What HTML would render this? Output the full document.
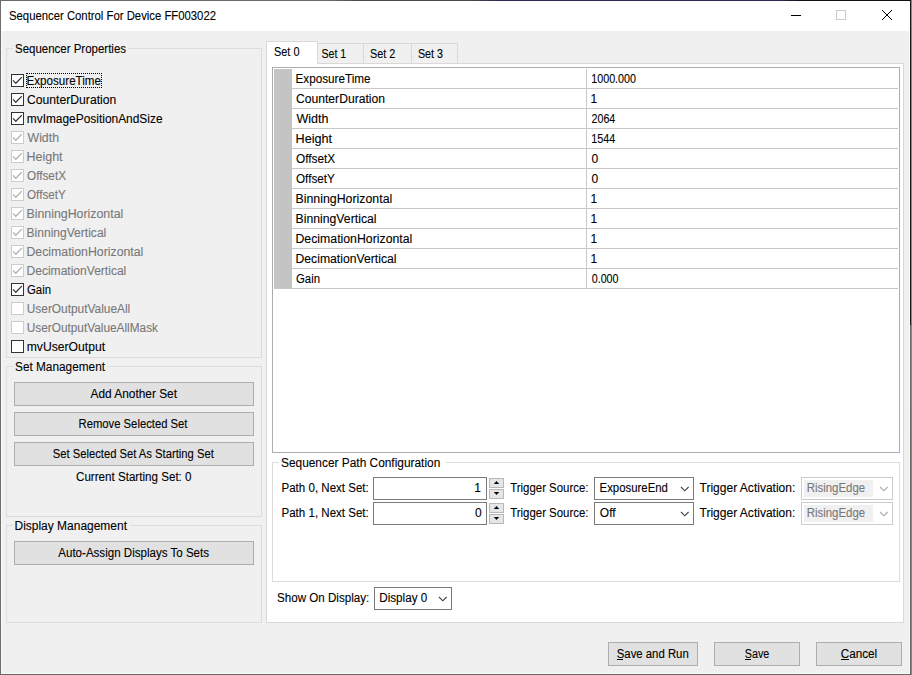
<!DOCTYPE html>
<html><head><meta charset="utf-8"><title>Sequencer Control For Device FF003022</title>
<style>
html,body{margin:0;padding:0}
body{width:912px;height:675px;overflow:hidden;background:#f0f0f0;position:relative;font-family:"Liberation Sans", sans-serif;font-size:12px;color:#000}
div,span,i,b,u{position:absolute;box-sizing:border-box}
.t{white-space:pre;line-height:16px;height:16px;transform-origin:0 0;-webkit-text-stroke:0.1px currentColor}
.ak{height:1px;background:#000}
.grp{left:0;top:0;width:0;height:0}
.gb{border:1px solid #dcdcdc}
.btn{background:#e1e1e1;border:1px solid #adadad}
.cb{width:13px;height:13px;background:#fff;border:1px solid #333}
.cb.d{border-color:#ccc;background:#fff}
.cb svg{position:absolute;left:-1px;top:-1px}
.hl{height:1px;background:#c8c8c8}
.combo{background:#fff;border:1px solid #7a7a7a}
.combo.d{border-color:#ccc}
svg{position:absolute;overflow:visible}
</style></head><body>

<div class="grp" id="window-frame">
<div style="left:0;top:0;width:912px;height:675px;background:#f0f0f0"></div>
<div style="left:1px;top:1px;width:909px;height:30px;background:#fff"></div>
<div style="left:0;top:0;width:912px;height:1px;background:linear-gradient(90deg,#6a6a6a 0,#6a6a6a 330px,#4a4a4a 360px,#4a4a4e 470px,#2a2a55 500px,#2a2a55 780px,#111 800px,#111 912px)"></div>
<div style="left:0;top:0;width:1px;height:675px;background:#6e6e6e"></div>
<div style="left:1px;top:31px;width:1px;height:643px;background:#fafafa"></div>
<div style="left:909px;top:31px;width:1px;height:643px;background:#fafafa"></div>
<div style="left:1px;top:673px;width:909px;height:1px;background:#fafafa"></div>
<div style="left:0;top:674px;width:912px;height:1px;background:#666"></div>
<div style="left:910px;top:0;width:1px;height:675px;background:linear-gradient(180deg,#1c1c1c 0,#1c1c1c 325px,#726c67 325px,#6b6560 675px)"></div>
<div style="left:911px;top:0;width:1px;height:675px;background:#3a96f0"></div>
</div>
<div class="grp" id="title-bar">
<svg style="left:0;top:0" width="912" height="31"><path d="M791 15.5H801" stroke="#000" stroke-width="1"/><rect x="836.5" y="10.5" width="9" height="9" fill="none" stroke="#ccc" stroke-width="1"/><path d="M882 10L892 20M892 10L882 20" stroke="#000" stroke-width="1"/></svg>
<span class="t" style="left:9px;top:8px;transform:translate(0.00px,0.00px) scaleX(0.9433);color:#000">Sequencer Control For Device FF003022</span>
</div>
<div class="grp" id="left-panel">
<div class="gb" style="left:6px;top:48px;width:256px;height:310px"></div>
<div class="gb" style="left:6px;top:366px;width:256px;height:151px"></div>
<div class="gb" style="left:6px;top:525px;width:256px;height:98px"></div>
<div style="left:13px;top:47px;width:115px;height:3px;background:#f0f0f0"></div>
<div style="left:13px;top:365px;width:95px;height:3px;background:#f0f0f0"></div>
<div style="left:13px;top:524px;width:117px;height:3px;background:#f0f0f0"></div>
<div class="cb" style="left:11px;top:74px"><svg width="13" height="13"><path d="M2.1 6.3L4.8 9.3L10.8 3.1" fill="none" stroke="#333" stroke-width="1.25"/></svg></div>
<div class="cb" style="left:11px;top:93px"><svg width="13" height="13"><path d="M2.1 6.3L4.8 9.3L10.8 3.1" fill="none" stroke="#333" stroke-width="1.25"/></svg></div>
<div class="cb" style="left:11px;top:112px"><svg width="13" height="13"><path d="M2.1 6.3L4.8 9.3L10.8 3.1" fill="none" stroke="#333" stroke-width="1.25"/></svg></div>
<div class="cb d" style="left:11px;top:131px"><svg width="13" height="13"><path d="M2.1 6.3L4.8 9.3L10.8 3.1" fill="none" stroke="#adadad" stroke-width="1.25"/></svg></div>
<div class="cb d" style="left:11px;top:150px"><svg width="13" height="13"><path d="M2.1 6.3L4.8 9.3L10.8 3.1" fill="none" stroke="#adadad" stroke-width="1.25"/></svg></div>
<div class="cb d" style="left:11px;top:169px"><svg width="13" height="13"><path d="M2.1 6.3L4.8 9.3L10.8 3.1" fill="none" stroke="#adadad" stroke-width="1.25"/></svg></div>
<div class="cb d" style="left:11px;top:188px"><svg width="13" height="13"><path d="M2.1 6.3L4.8 9.3L10.8 3.1" fill="none" stroke="#adadad" stroke-width="1.25"/></svg></div>
<div class="cb d" style="left:11px;top:207px"><svg width="13" height="13"><path d="M2.1 6.3L4.8 9.3L10.8 3.1" fill="none" stroke="#adadad" stroke-width="1.25"/></svg></div>
<div class="cb d" style="left:11px;top:226px"><svg width="13" height="13"><path d="M2.1 6.3L4.8 9.3L10.8 3.1" fill="none" stroke="#adadad" stroke-width="1.25"/></svg></div>
<div class="cb d" style="left:11px;top:245px"><svg width="13" height="13"><path d="M2.1 6.3L4.8 9.3L10.8 3.1" fill="none" stroke="#adadad" stroke-width="1.25"/></svg></div>
<div class="cb d" style="left:11px;top:264px"><svg width="13" height="13"><path d="M2.1 6.3L4.8 9.3L10.8 3.1" fill="none" stroke="#adadad" stroke-width="1.25"/></svg></div>
<div class="cb" style="left:11px;top:283px"><svg width="13" height="13"><path d="M2.1 6.3L4.8 9.3L10.8 3.1" fill="none" stroke="#333" stroke-width="1.25"/></svg></div>
<div class="cb d" style="left:11px;top:302px"></div>
<div class="cb d" style="left:11px;top:321px"></div>
<div class="cb" style="left:11px;top:340px"></div>
<div style="left:26px;top:73px;width:76px;height:15px;border:1px dotted #000"></div>
<div class="btn" style="left:14px;top:382px;width:240px;height:24px"></div>
<div class="btn" style="left:14px;top:412px;width:240px;height:24px"></div>
<div class="btn" style="left:14px;top:442px;width:240px;height:24px"></div>
<div class="btn" style="left:14px;top:541px;width:240px;height:24px"></div>
<span class="t" style="left:15px;top:41px;transform:translate(0.00px,0.00px) scaleX(0.9563);color:#000">Sequencer Properties</span>
<span class="t" style="left:26px;top:73px;transform:translate(0.50px,0.00px) scaleX(0.9689);color:#000">ExposureTime</span>
<span class="t" style="left:27px;top:92px;transform:translate(0.00px,0.00px) scaleX(1.0137);color:#000">CounterDuration</span>
<span class="t" style="left:26px;top:111px;transform:translate(0.75px,0.00px) scaleX(0.9929);color:#000">mvImagePositionAndSize</span>
<span class="t" style="left:27px;top:130px;transform:translate(0.50px,0.00px) scaleX(1.0271);color:#787878">Width</span>
<span class="t" style="left:26px;top:149px;transform:translate(0.50px,0.00px) scaleX(1.0387);color:#787878">Height</span>
<span class="t" style="left:27px;top:168px;transform:translate(0.00px,0.00px) scaleX(0.9804);color:#787878">OffsetX</span>
<span class="t" style="left:27px;top:187px;transform:translate(0.00px,0.00px) scaleX(0.9741);color:#787878">OffsetY</span>
<span class="t" style="left:26px;top:206px;transform:translate(0.50px,0.00px) scaleX(1.0289);color:#787878">BinningHorizontal</span>
<span class="t" style="left:26px;top:225px;transform:translate(0.50px,0.00px) scaleX(1.0050);color:#787878">BinningVertical</span>
<span class="t" style="left:26px;top:244px;transform:translate(0.50px,0.00px) scaleX(1.0239);color:#787878">DecimationHorizontal</span>
<span class="t" style="left:26px;top:263px;transform:translate(0.50px,0.00px) scaleX(1.0041);color:#787878">DecimationVertical</span>
<span class="t" style="left:27px;top:282px;transform:translate(0.00px,0.00px) scaleX(0.9489);color:#000">Gain</span>
<span class="t" style="left:26px;top:301px;transform:translate(0.75px,0.00px) scaleX(0.9906);color:#787878">UserOutputValueAll</span>
<span class="t" style="left:26px;top:320px;transform:translate(0.75px,0.00px) scaleX(0.9856);color:#787878">UserOutputValueAllMask</span>
<span class="t" style="left:26px;top:339px;transform:translate(0.75px,0.00px) scaleX(1.0116);color:#000">mvUserOutput</span>
<span class="t" style="left:15px;top:359px;transform:translate(0.00px,0.00px) scaleX(0.9848);color:#000">Set Management</span>
<span class="t" style="left:90px;top:386px;transform:translate(0.50px,0.00px) scaleX(0.9896);color:#000">Add Another Set</span>
<span class="t" style="left:78px;top:416px;transform:translate(0.50px,0.00px) scaleX(0.9392);color:#000">Remove Selected Set</span>
<span class="t" style="left:52px;top:446px;transform:translate(0.75px,0.00px) scaleX(0.9355);color:#000">Set Selected Set As Starting Set</span>
<span class="t" style="left:76px;top:469px;transform:translate(0.00px,0.00px) scaleX(0.9675);color:#000">Current Starting Set: 0</span>
<span class="t" style="left:14px;top:518px;transform:translate(0.50px,0.00px) scaleX(0.9980);color:#000">Display Management</span>
<span class="t" style="left:58px;top:545px;transform:translate(0.25px,0.00px) scaleX(0.9632);color:#000">Auto-Assign Displays To Sets</span>
</div>
<div class="grp" id="tab-control">
<div style="left:266px;top:63px;width:638px;height:560px;background:#fff;border:1px solid #d9d9d9"></div>
<div style="left:318px;top:43px;width:46px;height:21px;background:#f0f0f0;border:1px solid #d9d9d9;border-left:none"></div>
<div style="left:364px;top:43px;width:48px;height:21px;background:#f0f0f0;border:1px solid #d9d9d9;border-left:none"></div>
<div style="left:412px;top:43px;width:46px;height:21px;background:#f0f0f0;border:1px solid #d9d9d9;border-left:none"></div>
<div style="left:266px;top:41px;width:52px;height:23px;background:#fff;border:1px solid #d9d9d9;border-bottom:none"></div>
<div style="left:272px;top:67px;width:628px;height:386px;background:#fff;border:1px solid #abadb3"></div>
<div style="left:274px;top:69px;width:18px;height:220px;background:#c4c4c4"></div>
<div class="hl" style="left:292px;top:88px;width:606px"></div>
<div class="hl" style="left:292px;top:108px;width:606px"></div>
<div class="hl" style="left:292px;top:128px;width:606px"></div>
<div class="hl" style="left:292px;top:148px;width:606px"></div>
<div class="hl" style="left:292px;top:168px;width:606px"></div>
<div class="hl" style="left:292px;top:188px;width:606px"></div>
<div class="hl" style="left:292px;top:208px;width:606px"></div>
<div class="hl" style="left:292px;top:228px;width:606px"></div>
<div class="hl" style="left:292px;top:248px;width:606px"></div>
<div class="hl" style="left:292px;top:268px;width:606px"></div>
<div class="hl" style="left:274px;top:288px;width:624px"></div>
<div style="left:586px;top:69px;width:1px;height:220px;background:#c8c8c8"></div>
<div class="gb" style="left:272px;top:462px;width:628px;height:120px"></div>
<div style="left:279px;top:461px;width:167px;height:3px;background:#fff"></div>
<div style="left:373px;top:477px;width:114px;height:23px;background:#fff;border:1px solid #7a7a7a"></div>
<div style="left:489px;top:478px;width:15px;height:10px;background:#e6e6e6;border:1px solid #b8b8b8"></div>
<div style="left:489px;top:489px;width:15px;height:10px;background:#e6e6e6;border:1px solid #b8b8b8"></div>
<svg style="left:489px;top:478px" width="15" height="22"><path d="M4.8 6L7.5 2.9L10.2 6Z" fill="#000"/><path d="M4.8 14L7.5 17.1L10.2 14Z" fill="#000"/></svg>
<div class="combo" style="left:594px;top:477px;width:100px;height:23px"></div>
<svg style="left:681.2px;top:486.8px" width="9" height="5"><path d="M0 0L3.8 3.8L7.6 0" fill="none" stroke="#404040" stroke-width="1.1"/></svg>
<div class="combo d" style="left:801px;top:477px;width:92px;height:23px"></div>
<div style="left:804px;top:480px;width:69px;height:17px;background:#f0f0f0"></div>
<svg style="left:880.3px;top:486.8px" width="9" height="5"><path d="M0 0L3.8 3.8L7.6 0" fill="none" stroke="#a8a8a8" stroke-width="1.1"/></svg>
<div style="left:373px;top:502px;width:114px;height:23px;background:#fff;border:1px solid #7a7a7a"></div>
<div style="left:489px;top:503px;width:15px;height:10px;background:#e6e6e6;border:1px solid #b8b8b8"></div>
<div style="left:489px;top:514px;width:15px;height:10px;background:#e6e6e6;border:1px solid #b8b8b8"></div>
<svg style="left:489px;top:503px" width="15" height="22"><path d="M4.8 6L7.5 2.9L10.2 6Z" fill="#000"/><path d="M4.8 14L7.5 17.1L10.2 14Z" fill="#000"/></svg>
<div class="combo" style="left:594px;top:502px;width:100px;height:23px"></div>
<svg style="left:681.2px;top:511.8px" width="9" height="5"><path d="M0 0L3.8 3.8L7.6 0" fill="none" stroke="#404040" stroke-width="1.1"/></svg>
<div class="combo d" style="left:801px;top:502px;width:92px;height:23px"></div>
<div style="left:804px;top:505px;width:69px;height:17px;background:#f0f0f0"></div>
<svg style="left:880.3px;top:511.8px" width="9" height="5"><path d="M0 0L3.8 3.8L7.6 0" fill="none" stroke="#a8a8a8" stroke-width="1.1"/></svg>
<div class="combo" style="left:374px;top:587px;width:78px;height:23px"></div>
<svg style="left:439.2px;top:596.8px" width="9" height="5"><path d="M0 0L3.8 3.8L7.6 0" fill="none" stroke="#404040" stroke-width="1.1"/></svg>
<span class="t" style="left:273px;top:44px;transform:translate(0.95px,0.00px) scaleX(0.9106);color:#000">Set 0</span>
<span class="t" style="left:321px;top:46px;transform:translate(0.50px,0.00px) scaleX(0.8841);color:#000">Set 1</span>
<span class="t" style="left:369px;top:46px;transform:translate(0.95px,0.00px) scaleX(0.9020);color:#000">Set 2</span>
<span class="t" style="left:417px;top:46px;transform:translate(0.95px,0.00px) scaleX(0.8931);color:#000">Set 3</span>
<span class="t" style="left:295px;top:71px;transform:translate(0.50px,0.00px) scaleX(0.9754);color:#000">ExposureTime</span>
<span class="t" style="left:591px;top:71px;transform:translate(0.25px,0.00px) scaleX(0.8943);color:#000">1000.000</span>
<span class="t" style="left:296px;top:91px;transform:translate(0.00px,0.00px) scaleX(1.0109);color:#000">CounterDuration</span>
<span class="t" style="left:590px;top:91px;transform:translate(0.45px,0.00px) scaleX(1.0000);color:#000">1</span>
<span class="t" style="left:296px;top:111px;transform:translate(0.50px,0.00px) scaleX(1.0434);color:#000">Width</span>
<span class="t" style="left:591px;top:111px;transform:translate(0.50px,0.00px) scaleX(0.8904);color:#000">2064</span>
<span class="t" style="left:295px;top:131px;transform:translate(0.50px,0.00px) scaleX(1.0531);color:#000">Height</span>
<span class="t" style="left:591px;top:131px;transform:translate(0.25px,0.00px) scaleX(0.9005);color:#000">1544</span>
<span class="t" style="left:296px;top:151px;transform:translate(0.00px,0.00px) scaleX(0.9866);color:#000">OffsetX</span>
<span class="t" style="left:591px;top:151px;transform:translate(0.50px,0.00px) scaleX(1.0000);color:#000">0</span>
<span class="t" style="left:296px;top:171px;transform:translate(0.00px,0.00px) scaleX(0.9741);color:#000">OffsetY</span>
<span class="t" style="left:591px;top:171px;transform:translate(0.50px,0.00px) scaleX(1.0000);color:#000">0</span>
<span class="t" style="left:295px;top:191px;transform:translate(0.50px,0.00px) scaleX(1.0289);color:#000">BinningHorizontal</span>
<span class="t" style="left:590px;top:191px;transform:translate(0.45px,0.00px) scaleX(1.0000);color:#000">1</span>
<span class="t" style="left:295px;top:211px;transform:translate(0.50px,0.00px) scaleX(1.0208);color:#000">BinningVertical</span>
<span class="t" style="left:590px;top:211px;transform:translate(0.45px,0.00px) scaleX(1.0000);color:#000">1</span>
<span class="t" style="left:295px;top:231px;transform:translate(0.50px,0.00px) scaleX(1.0239);color:#000">DecimationHorizontal</span>
<span class="t" style="left:590px;top:231px;transform:translate(0.45px,0.00px) scaleX(1.0000);color:#000">1</span>
<span class="t" style="left:295px;top:251px;transform:translate(0.50px,0.00px) scaleX(1.0167);color:#000">DecimationVertical</span>
<span class="t" style="left:590px;top:251px;transform:translate(0.45px,0.00px) scaleX(1.0000);color:#000">1</span>
<span class="t" style="left:296px;top:271px;transform:translate(0.00px,0.00px) scaleX(0.9489);color:#000">Gain</span>
<span class="t" style="left:591px;top:271px;transform:translate(0.75px,0.00px) scaleX(0.8913);color:#000">0.000</span>
<span class="t" style="left:281px;top:455px;transform:translate(0.00px,0.00px) scaleX(0.9905);color:#000">Sequencer Path Configuration</span>
<span class="t" style="left:281px;top:480px;transform:translate(0.50px,0.00px) scaleX(0.9622);color:#000">Path 0, Next Set:</span>
<span class="t" style="left:474px;top:480px;transform:translate(0.25px,0.00px) scaleX(1.0000);color:#000">1</span>
<span class="t" style="left:510px;top:480px;transform:translate(0.20px,0.00px) scaleX(0.9514);color:#000">Trigger Source:</span>
<span class="t" style="left:599px;top:480px;transform:translate(0.60px,0.00px) scaleX(0.9477);color:#000">ExposureEnd</span>
<span class="t" style="left:699px;top:480px;transform:translate(0.55px,0.00px) scaleX(1.0017);color:#000">Trigger Activation:</span>
<span class="t" style="left:806px;top:480px;transform:translate(0.65px,0.00px) scaleX(0.9536);color:#787878">RisingEdge</span>
<span class="t" style="left:281px;top:505px;transform:translate(0.50px,0.00px) scaleX(0.9622);color:#000">Path 1, Next Set:</span>
<span class="t" style="left:474px;top:505px;transform:translate(0.95px,0.00px) scaleX(1.0000);color:#000">0</span>
<span class="t" style="left:510px;top:505px;transform:translate(0.20px,0.00px) scaleX(0.9514);color:#000">Trigger Source:</span>
<span class="t" style="left:599px;top:505px;transform:translate(0.85px,0.00px) scaleX(0.9977);color:#000">Off</span>
<span class="t" style="left:699px;top:505px;transform:translate(0.55px,0.00px) scaleX(1.0017);color:#000">Trigger Activation:</span>
<span class="t" style="left:806px;top:505px;transform:translate(0.65px,0.00px) scaleX(0.9536);color:#787878">RisingEdge</span>
<span class="t" style="left:277px;top:590px;transform:translate(0.00px,0.00px) scaleX(0.9675);color:#000">Show On Display:</span>
<span class="t" style="left:379px;top:590px;transform:translate(0.25px,0.00px) scaleX(0.9730);color:#000">Display 0</span>
</div>
<div class="grp" id="dialog-buttons">
<div class="btn" style="left:608px;top:642px;width:90px;height:24px"></div>
<div class="btn" style="left:714px;top:642px;width:86px;height:24px"></div>
<div class="btn" style="left:816px;top:642px;width:86px;height:24px"></div>
<i class="ak" style="left:617px;top:659px;width:6px"></i>
<i class="ak" style="left:745px;top:659px;width:6px"></i>
<i class="ak" style="left:841px;top:659px;width:8px"></i>
<span class="t" style="left:616px;top:646px;transform:translate(0.75px,0.00px) scaleX(0.9468);color:#000">Save and Run</span>
<span class="t" style="left:744px;top:646px;transform:translate(0.75px,0.00px) scaleX(0.8968);color:#000">Save</span>
<span class="t" style="left:840px;top:646px;transform:translate(0.65px,0.00px) scaleX(0.9780);color:#000">Cancel</span>
</div>
</body></html>
